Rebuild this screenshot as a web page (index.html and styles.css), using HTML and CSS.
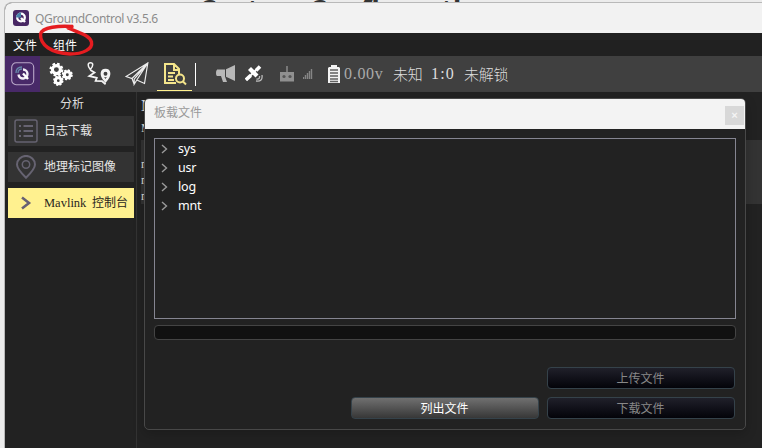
FILE: index.html
```html
<!DOCTYPE html>
<html lang="zh-CN">
<head>
<meta charset="utf-8">
<title>QGroundControl v3.5.6</title>
<link rel="stylesheet" href="styles.css">
</head>
<body>
<div class="backdrop">Custom Configuration</div>
<div class="window">
  <header class="titlebar">
    <svg class="app-icon" width="16" height="16" viewBox="0 0 16 16"><rect width="16" height="16" rx="3" fill="#482764"/><circle cx="8" cy="7.5" r="3.8" fill="none" stroke="#fff" stroke-width="2.3"/><path d="M3 7.5A5 5 0 0 1 8 2.5V7.5Z" fill="#4a83aa"/><path d="M8 8l4 4" stroke="#fff" stroke-width="2.4"/></svg>
    <span>QGroundControl v3.5.6</span>
  </header>
  <nav class="menubar"><span>文件</span><span>组件</span></nav>
  <div class="toolbar">
    <div class="tool brand"><svg width="24" height="24" viewBox="0 0 24 24" fill="none"><rect x=".7" y=".7" width="22" height="22" rx="4.5" stroke="#b9a7c8" stroke-width="1.1"/><path d="M12 7.500a4.500 4.500 0 1 1-4.500 5" stroke="#f3eef6" stroke-width="2.4"/><path d="M12 11.500l5 5.500" stroke="#fff" stroke-width="2.4"/><path d="M5 11Q5 5 11 5M7 11q0-4 4-4" stroke="#6789aa" stroke-width="1.3"/></svg></div>
    <div class="tool"><svg width="24" height="24" viewBox="0 0 24 24" fill="none" stroke="#fff"><g stroke-width="3.1"><circle cx="7.4" cy="7.6" r="4"/><circle cx="18.3" cy="12.8" r="3"/><circle cx="9.3" cy="18.7" r="2.9"/></g><g stroke-width="2.2"><circle cx="7.4" cy="7.6" r="5.9" stroke-dasharray="2.6 2.03"/><circle cx="18.3" cy="12.8" r="4.4" stroke-dasharray="2 1.45"/><circle cx="9.3" cy="18.7" r="4.1" stroke-dasharray="1.9 1.32"/></g></svg></div>
    <div class="tool"><svg width="24" height="24" viewBox="0 0 24 24" fill="none" stroke="#f2f2f2"><path d="M3.3 7.5C.2 3.7.7.8 3.5.8s3.2 2.9-.2 6.7Z" stroke-width="1.5"/><path d="M3.3 8L7.500 10.5 2.300 14l7.5 1.8-1.2 3.2 6.5.2 3.500 3" stroke-width="1.8"/><path d="M18.5 19C13 12.500 14.500 8 18.5 8s5.500 4.500 0 11Z" stroke-width="2.600"/><circle cx="18.500" cy="11.800" r="2.800" stroke-width="1.500"/></svg></div>
    <div class="tool"><svg width="24" height="24" viewBox="0 0 24 24" fill="none" stroke="#ededed" stroke-width="1.2"><path d="M22.8 1L1 14.5l6 2L22.8 1 19.5 21.5 11.8 18 22.8 1 9.2 17.2v5l2.6-4.2M7 16.5l2.2 5.7"/></svg></div>
    <div class="tool active"><svg width="24" height="24" viewBox="0 0 24 24" fill="none" stroke="#f4e58b" stroke-width="2"><path d="M13 21H2V2h9l5 5v5M11 2v6h5M5 11h7M5 14.5h5M5 18h6"/><circle cx="17" cy="16.5" r="4"/><path d="M20 19.5l3 3"/></svg></div>
    <i class="divider"></i>
    <svg class="mega" width="20" height="18" viewBox="0 0 20 18"><path d="M1 5Q0 5 0 8t1 3h4l2 6h4l-2-5.500V4.500H1ZM10 4.300L19 0v16l-9-4.200Z" fill="#b8b8b8"/></svg>
    <svg class="sat" width="18" height="18" viewBox="0 0 18 18" fill="none"><path d="M4.500 3.500l7.500 7.500" stroke="#fff" stroke-width="4.200"/><path d="M.8 14.900l5-4.500M11 5.500l4-4" stroke="#fff" stroke-width="3.600"/><path d="M5 11l6-6" stroke="#fff" stroke-width="2"/><path d="M17 10q1 7-6 6M14.500 11q.5 3.500-3 3" stroke="#bdbdbd" stroke-width="1.300"/></svg>
    <svg class="radio" width="14" height="16" viewBox="0 0 14 16"><path d="M6.300 0h1.400v6H14v9.500H0V6h6.300Z" fill="#909090"/><circle cx="4" cy="10.500" r="1.600" fill="#555"/><circle cx="10" cy="10.500" r="1.600" fill="#555"/></svg>
    <svg class="signal" width="10" height="10" viewBox="0 0 10 10"><path d="M.5 8v2M2.500 6v4M4.500 4v6M6.500 2v8M8.500 0v10" stroke="#858585" stroke-width="1.400"/></svg>
    <svg class="battery" width="12" height="19" viewBox="0 0 12 19"><path d="M3 0h6v2h2l1 1v15H0V3l1-1h2Z" fill="#f3f3f3"/><path d="M2 5h8M2 8h8M2 11h8M2 14h8M2 16.500h8" stroke="#626262" stroke-width="1.300"/></svg>
    <span class="status volts">0.00v</span><span class="status unknown">未知</span><span class="status ratio">1:0</span><span class="status">未解锁</span>
  </div>
  <div class="workspace">
    <aside>
      <h2>分析</h2>
      <div class="entry"><svg width="24" height="24" viewBox="0 0 24 24" fill="none" stroke="#666371"><rect x="1" y="1" width="22" height="22" rx="2" stroke-width="1.500"/><path d="M9.500 7H19M9.500 12H19M9.500 17H19M5 7h2M5 12h2M5 17h2" stroke-width="2"/></svg><span>日志下载</span></div>
      <div class="entry"><svg width="24" height="24" viewBox="0 0 24 24" fill="none" stroke="#666371"><path d="M12 22.700Q3 14 3 9.500a9 8.600 0 0 1 18 0q0 4.500-9 13.200Z" stroke-width="2"/><circle cx="12" cy="9.500" r="3.700" stroke-width="1.500"/></svg><span>地理标记图像</span></div>
      <div class="entry selected"><svg width="24" height="24" viewBox="0 0 24 24" fill="none" stroke="#686273" stroke-width="2.600"><path d="M8 6.500l7 5.500-7 5.500"/></svg><span><b>Mavlink</b>控制台</span></div>
    </aside>
    <main><p>M</p><p class="intro">M</p><div class="console">n<br>n<br>n</div></main>
  </div>
</div>
<section class="dialog">
  <header><span>板载文件</span><button>×</button></header>
  <div class="content">
    <ul>
      <li><svg width="8" height="10" viewBox="0 0 8 10"><path d="M1 1l4.500 4L1 9"/></svg>sys</li>
      <li><svg width="8" height="10" viewBox="0 0 8 10"><path d="M1 1l4.500 4L1 9"/></svg>usr</li>
      <li><svg width="8" height="10" viewBox="0 0 8 10"><path d="M1 1l4.500 4L1 9"/></svg>log</li>
      <li><svg width="8" height="10" viewBox="0 0 8 10"><path d="M1 1l4.500 4L1 9"/></svg>mnt</li>
    </ul>
    <div class="progress"></div>
    <div class="actions"><button class="upload" disabled>上传文件</button><button class="list">列出文件</button><button disabled>下载文件</button></div>
  </div>
</section>
<svg class="annotation" width="60" height="36" viewBox="38 23 60 36"><path d="M72 26.500C60 25.500 42 27 40.500 34 40 45 51 53 70 54c13 0 23-5 21.500-12-2-7-12-9-23.500-14l4-1.500" fill="none" stroke="#e51c20" stroke-width="3.400" stroke-linecap="round" stroke-linejoin="round"/></svg>
</body>
</html>
```
FILE: styles.css
```css
* { box-sizing: border-box; }
body { margin: 0; width: 762px; height: 448px; overflow: hidden; position: relative; background: #ececec; padding: 2px 0 0 4px; font-family: "Noto Sans", "Noto Sans CJK SC", sans-serif; }
.backdrop { position: absolute; left: 199px; top: -7px; width: 310px; white-space: nowrap; color: #333; font: bold 27px/32px "Open Sans", sans-serif; }
.window { position: relative; width: 759px; height: 447px; border: 1px solid #b9b9b9; border-right: 0; border-radius: 8px 0 0; overflow: hidden; background: #222; }
.titlebar { height: 30px; display: flex; align-items: center; padding-left: 8px; gap: 6px; background: #f2f2f2; color: #8c8c8c; font-size: 12px; letter-spacing: -.35px; }
.menubar { height: 23px; display: flex; gap: 16px; padding-left: 8px; align-items: center; background: #212121; color: #fff; font-size: 12px; }
.toolbar { height: 36px; display: flex; align-items: center; background: #404040; }
.tool { width: 35px; height: 36px; display: flex; align-items: center; justify-content: center; margin-right: 3px; }
.tool svg { display: block; }
.brand { background: #482968; }
.active { height: 34px; padding-top: 1px; margin-right: 2px; border-bottom: 1px solid #fff18e; }
.divider { width: 1px; height: 23px; background: #fff; margin-left: 1px; }
.mega { margin-left: 20px; }
.sat { margin: 0 0 0 9px; }
.radio { margin-left: 17px; }
.signal { margin-left: 9px; }
.battery { margin-left: 15px; }
.status { color: #ddd; font: 300 15px/20px "Noto Sans CJK SC", sans-serif; white-space: pre; letter-spacing: -.3px; }
.volts { color: #aaa; font: 16px/20px "Liberation Serif", serif; letter-spacing: .7px; margin-left: 4px; width: 49px; }
.unknown { width: 38px; }
.ratio { width: 33px; font: 16px/20px "Liberation Serif", serif; letter-spacing: 1.2px; }
.workspace { display: flex; height: 356px; }
aside { width: 132px; height: 100%; padding: 2px 0 0 3px; border-right: 1px solid #333; display: flex; flex-direction: column; gap: 6px; }
h2 { height: 16px; margin: 0; font-size: 12px; line-height: 20px; font-weight: 400; color: #ddd; text-align: center; }
.entry { width: 126px; height: 30px; padding-left: 6px; display: flex; align-items: center; gap: 6px; background: #333; color: #e6e6e6; font-size: 12px; line-height: 16px; white-space: nowrap; }
.selected { background: #fff18f; color: #292621; }
.entry span { display: flex; }
.entry b { width: 48px; font: 12.500px/17px "Liberation Serif", serif; }
main { flex: 1; padding: 2px 0 0 4px; font-family: "Liberation Serif", serif; color: #ddd; }
main p { margin: 0; height: 24px; font-size: 16px; line-height: 24px; }
main .intro { height: 22px; font-size: 12px; line-height: 20px; }
.console { height: 64px; padding-top: 16px; background: #333; font: 12px/16px "Liberation Serif", serif; }
.dialog { position: absolute; left: 144px; top: 98px; width: 602px; height: 332px; border: 1px solid #484848; border-radius: 5px; overflow: hidden; background: #222; box-shadow: 0 4px 12px #0003; }
.dialog header { height: 30px; padding: 0 1px 0 9px; display: flex; justify-content: space-between; background: #f3f3f3; color: #999; font-size: 12px; line-height: 27px; }
.dialog header button { width: 19px; height: 19px; margin-top: 7px; border: 0; padding: 0; background: #d8d8d8; color: #f4f4f4; font: bold 11px/18px "Liberation Mono", monospace; }
.content { padding: 9px; }
ul { list-style: none; height: 181px; margin: 0; padding: 0 6px; border: 1px solid #858591; }
li { height: 19px; display: flex; align-items: center; gap: 9px; color: #fff; font-size: 12.500px; letter-spacing: -.2px; line-height: 18px; }
li svg { fill: none; stroke: #999; stroke-width: 1.400; }
.progress { height: 15px; margin-top: 6px; border: 1px solid #444; border-radius: 4px; background: #111; }
.actions { margin: 27px 1px 0 0; display: grid; grid-template-columns: 188px 188px; justify-content: end; gap: 8px; }
.actions button { height: 22px; padding: 0 1px 0 0; border: 1px solid #35424a; border-radius: 4px; color: #888; background: linear-gradient(#20202a, #030309); font: 12px/18px "Noto Sans CJK SC", sans-serif; }
.actions .upload { grid-column: 2; }
.actions .list { background: linear-gradient(#707070, #373737); color: #fff; }
.annotation { position: absolute; left: 38px; top: 23px; }
```
